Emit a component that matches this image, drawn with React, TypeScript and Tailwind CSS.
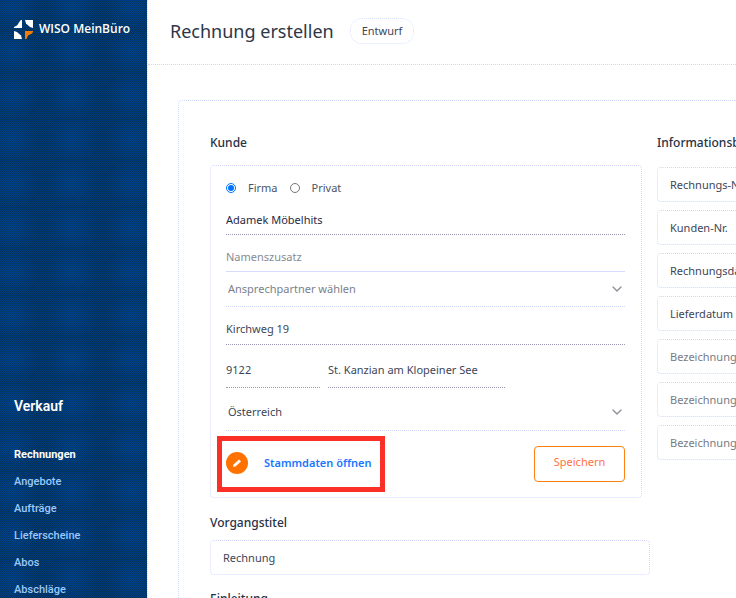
import type { ReactNode } from "react";
import { ChevronDown } from "lucide-react";

const salesLinks = ["Angebote", "Aufträge", "Lieferscheine", "Abos", "Abschläge"];

const infoFields = [
  { id: "rechnungsnr", text: "Rechnungs-Nr.", empty: false },
  { id: "kundennr", text: "Kunden-Nr.", empty: false },
  { id: "rechnungsdatum", text: "Rechnungsdatum", empty: false },
  { id: "lieferdatum", text: "Lieferdatum", empty: false },
  { id: "bez1", text: "Bezeichnung", empty: true },
  { id: "bez2", text: "Bezeichnung", empty: true },
  { id: "bez3", text: "Bezeichnung", empty: true },
];

function Logo() {
  return (
    <a href="#start" className="flex h-5 items-center gap-1.5 whitespace-nowrap text-white">
      <svg width="19" height="19" viewBox="0 0 19 19" className="shrink-0" aria-hidden="true">
        <path d="M8 0v8H0V7l3-1.500L6 1l1-1z" fill="#fff" />
        <path d="M11 0h8v8l-3-1-4-3.500z" fill="#fff" />
        <path d="M0 11l3 1 4 3.500 1 3.500H0z" fill="#fff" />
        <path d="M11 11h8v1l-1 1.500-4 2L12.500 19H11z" fill="#f57c00" />
      </svg>
      <span className="font-['Open_Sans',sans-serif] text-xs font-semibold">WISO MeinBüro</span>
    </a>
  );
}

function Sidebar() {
  return (
    <aside className="w-[147px] shrink-0 bg-[#003b7b] bg-[radial-gradient(circle,rgba(0,88,190,0.25),transparent_70%),repeating-conic-gradient(#002f50_0_25%,#003c82_0_50%)] bg-[length:60px_44px,2px_2px] bg-[position:42px_30px,0_0] px-3.5 pt-[19px]">
      <Logo />
      <nav aria-label="Verkauf" className="pt-[357px] font-[Roboto,sans-serif]">
        <h2 className="text-sm leading-5 font-semibold text-white">Verkauf</h2>
        <ul className="mt-[26px] text-[11px]">
          <li className="flex h-[27px] items-center font-bold text-white">
            <a href="#rechnungen" aria-current="page">Rechnungen</a>
          </li>
          {salesLinks.map((label) => (
            <li key={label} className="flex h-[27px] items-center font-medium text-[#9cc8fa]">
              <a href={"#" + label.toLowerCase()}>{label}</a>
            </li>
          ))}
        </ul>
      </nav>
    </aside>
  );
}

function SelectRow({ label, children, className }: { label: string; children: ReactNode; className: string }) {
  return (
    <div className={"relative border-b border-dotted border-[#d3daff] " + className}>
      <select aria-label={label} className="h-full w-full appearance-none bg-transparent pl-0.5 outline-none">
        {children}
      </select>
      <ChevronDown className="pointer-events-none absolute top-1/2 right-0 size-4 -translate-y-1/2 text-[#8b8f96]" aria-hidden="true" />
    </div>
  );
}

function CustomerCard() {
  return (
    <section aria-label="Kunde" className="rounded border border-dotted border-[#d6d9ff] pt-[13px] pr-4 pb-[5px] pl-[15px]">
      <div className="flex h-[18px] items-center text-[#4a5568]">
        <input id="firma" type="radio" name="art" defaultChecked className="size-[10px] accent-[#0075ff]" />
        <label htmlFor="firma" className="ml-3">Firma</label>
        <input id="privat" type="radio" name="art" className="ml-3 size-[10px]" />
        <label htmlFor="privat" className="ml-3">Privat</label>
      </div>
      <input aria-label="Firmenname" defaultValue="Adamek Möbelhits" className="mt-[7px] h-[31px] w-full border-b border-dotted border-[#9a9ab4] text-[#1f2a44] outline-none" />
      <input aria-label="Namenszusatz" placeholder="Namenszusatz" className="mt-[6px] h-[31px] w-full border-b border-[#d5dcff] outline-none placeholder:text-[#858b94]" />
      <SelectRow label="Ansprechpartner" className="h-[35px] text-[#7b818c]">
        <option>Ansprechpartner wählen</option>
      </SelectRow>
      <input aria-label="Straße" defaultValue="Kirchweg 19" className="mt-[6px] h-8 w-full border-b border-dotted border-[#9a9ab4] outline-none" />
      <div className="mt-[8px] flex gap-2">
        <input aria-label="Postleitzahl" defaultValue="9122" className="h-[35px] w-[94px] border-b border-dotted border-[#9a9ab4] pb-0.5 outline-none" />
        <input aria-label="Ort" defaultValue="St. Kanzian am Klopeiner See" className="h-[35px] w-[177px] border-b border-dotted border-[#9a9ab4] pb-0.5 outline-none" />
      </div>
      <SelectRow label="Land" className="mt-[6px] h-[37px]">
        <option>Österreich</option>
      </SelectRow>
      <div className="mt-[5px] -ml-[9px] flex items-center justify-between">
        <div className="border-[5px] border-[#fa2f28]">
          <button type="button" className="flex h-[46px] w-[158px] items-center pb-0.5 pl-1 font-semibold text-[#1976ff]">
            <svg width="22" height="22" viewBox="0 0 22 22" className="mr-4 shrink-0" aria-hidden="true">
              <circle cx="11" cy="11" r="11" fill="#ff7200" />
              <path d="M7 15l.5-2.500 5.500-5 2 2-5.500 5z" fill="#fff" />
            </svg>
            Stammdaten öffnen
          </button>
        </div>
        <button type="button" className="h-9 w-[91px] rounded border border-[#ff7f11] pb-1 text-[#ff7043]">Speichern</button>
      </div>
    </section>
  );
}

export default function App() {
  return (
    <div className="flex h-screen overflow-hidden bg-white font-['Noto_Sans',sans-serif] text-[11px] text-[#3d4657]">
      <Sidebar />
      <div className="flex min-w-0 flex-1 flex-col border-l border-dotted border-[#d6d9ff]">
        <header className="flex h-[65px] shrink-0 items-center gap-4 border-b border-dotted border-[#d0d4ff] pb-0.5 pl-[22px]">
          <h1 className="text-lg text-[#2c3648]">Rechnung erstellen</h1>
          <span className="rounded-xl border border-dotted border-[#d8e0ff] px-[11px] py-1 leading-4">Entwurf</span>
        </header>
        <main className="mt-[35px] ml-[30px] flex flex-1 gap-[7px] overflow-hidden rounded-tl border-t border-l border-dotted border-[#cfdcff] pt-[32px] pl-[31px]">
          <div className="w-[440px] shrink-0">
            <h2 className="mb-3 text-xs leading-5 font-medium text-[#263145]">Kunde</h2>
            <div className="mr-2">
              <CustomerCard />
            </div>
            <label htmlFor="vorgang" className="mt-[15px] block text-xs leading-5 font-medium text-[#263145]">Vorgangstitel</label>
            <input id="vorgang" defaultValue="Rechnung" className="mt-[7px] h-[35px] w-full rounded border border-dotted border-[#d6d9ff] px-3 outline-none" />
            <h2 className="mt-[14px] text-xs leading-5 font-medium text-[#263145]">Einleitung</h2>
          </div>
          <div className="w-[230px] shrink-0">
            <h2 className="mb-[14px] text-xs leading-5 font-medium text-[#263145]">Informationsblock</h2>
            <div className="flex flex-col gap-2">
              {infoFields.map((field) => (
                <input
                  key={field.id}
                  aria-label={field.text}
                  defaultValue={field.empty ? undefined : field.text}
                  placeholder={field.empty ? field.text : undefined}
                  className="h-[35px] rounded border border-dotted border-[#cadbff] px-3 outline-none placeholder:text-[#777b84]"
                />
              ))}
            </div>
          </div>
        </main>
      </div>
    </div>
  );
}
